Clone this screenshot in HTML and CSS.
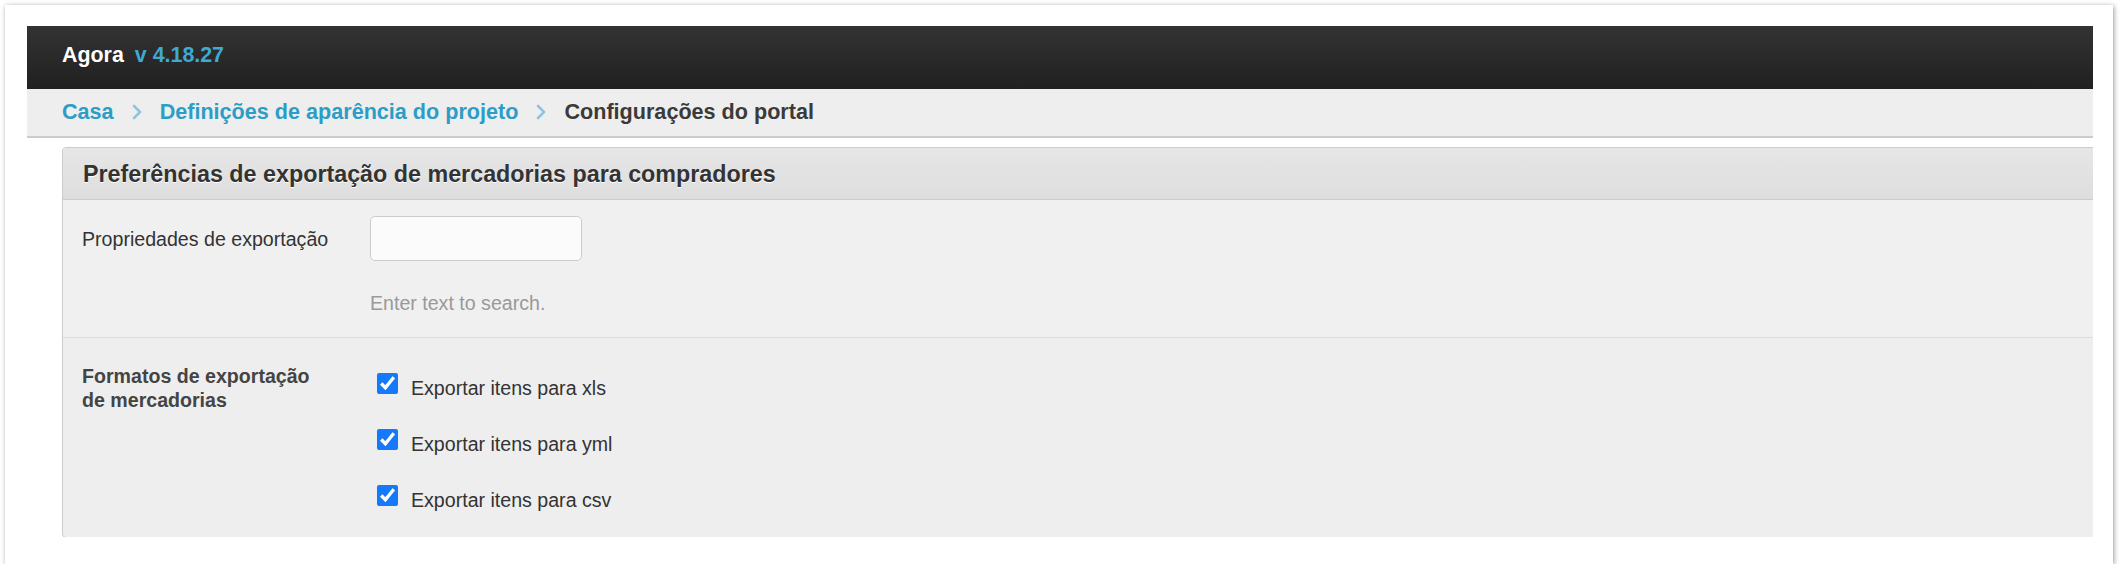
FILE: index.html
```html
<!DOCTYPE html>
<html lang="pt">
<head>
<meta charset="utf-8">
<title>Agora - Configurações do portal</title>
<link rel="stylesheet" href="styles.css">
</head>
<body>
<div class="card">
  <div class="app">
    <header class="topbar">
      <span class="brand">Agora</span>
      <span class="version">v 4.18.27</span>
    </header>
    <nav class="breadcrumb">
      <a class="crumb-link" href="#">Casa</a>
      <svg class="chev" width="10" height="16" viewBox="0 0 10 16"><polyline points="2,2 8,8 2,14" fill="none" stroke="#8ec4de" stroke-width="2.6" stroke-linecap="round" stroke-linejoin="round"/></svg>
      <a class="crumb-link" href="#">Definições de aparência do projeto</a>
      <svg class="chev" width="10" height="16" viewBox="0 0 10 16"><polyline points="2,2 8,8 2,14" fill="none" stroke="#8ec4de" stroke-width="2.6" stroke-linecap="round" stroke-linejoin="round"/></svg>
      <span class="crumb-current">Configurações do portal</span>
    </nav>
    <main class="content">
      <section class="panel">
        <div class="panel-head">Preferências de exportação de mercadorias para compradores</div>
        <div class="field field-first">
          <label class="field-label" for="props">Propriedades de exportação</label>
          <div class="field-control">
            <input class="text-input" id="props" type="text">
            <div class="help">Enter text to search.</div>
          </div>
        </div>
        <div class="field field-second">
          <div class="field-label bold">Formatos de exportação<br>de mercadorias</div>
          <div class="checks">
            <label class="check"><input type="checkbox" checked><span>Exportar itens para xls</span></label>
            <label class="check"><input type="checkbox" checked><span>Exportar itens para yml</span></label>
            <label class="check"><input type="checkbox" checked><span>Exportar itens para csv</span></label>
          </div>
        </div>
      </section>
    </main>
  </div>
</div>
</body>
</html>
```
FILE: styles.css
```css
* { box-sizing: border-box; }
html, body { margin: 0; padding: 0; background: #ffffff; }
body { font-family: "Liberation Sans", Arial, Helvetica, sans-serif; color: #333; }

.card {
  margin: 5px 0 0 5px;
  width: 2108px;
  height: 559px;
  background: #fff;
  box-shadow: 1px 1px 5px rgba(0,0,0,0.4);
  padding: 21px 20px 0 22px;
}
.app { overflow: hidden; height: 511px; }

.topbar {
  height: 63px;
  background: linear-gradient(#333333, #202020);
  display: flex;
  align-items: center;
  padding: 0 0 5px 35px;
  font-size: 21.4px;
  font-weight: bold;
}
.brand { color: #fff; }
.version { color: #3fa9d4; margin-left: 11px; }

.breadcrumb {
  height: 49px;
  background: #eeeeee;
  border-bottom: 2px solid #cccccc;
  display: flex;
  align-items: center;
  padding: 0 0 2px 35px;
  font-size: 21.6px;
  font-weight: bold;
}
.crumb-link { color: #2c9dc6; text-decoration: none; }
.crumb-current { color: #3a3a3a; }
.chev { margin: 0 18px 0 18px; }

.content { padding: 9px 0 0 35px; }

.panel {
  width: calc(100% + 10px);
  border: 1px solid #cccccc;
  border-radius: 4px;
  background: #eeeeee;
  overflow: hidden;
}
.panel-head {
  height: 52px;
  display: flex;
  align-items: center;
  padding: 1px 0 0 20px;
  background: linear-gradient(#e6e6e6, #dedede);
  border-bottom: 1px solid #cccccc;
  font-size: 23.3px;
  font-weight: bold;
  color: #333;
  text-shadow: 0 1px 0 #ffffff;
}

.field {
  display: grid;
  grid-template-columns: 288px 1fr;
  padding-left: 19px;
  font-size: 19.6px;
}
.field-first {
  background: #f0f0f0;
  border-bottom: 1px solid #dcdcdc;
  padding-top: 16px;
  padding-bottom: 20px;
  height: 138px;
}
.field-label { line-height: 45px; color: #333; padding-top: 1px; }
.field-label.bold { font-weight: bold; line-height: 24px; color: #444; padding-top: 26px; }
.text-input {
  display: block;
  width: 212px;
  height: 45px;
  border: 1px solid #cccccc;
  border-radius: 5px;
  background: #fbfbfb;
  margin: 0;
  padding: 0 8px;
  font: inherit;
}
.help { color: #999; margin-top: 30px; line-height: 24px; }

.field-second { height: 199px; }
.checks {
  display: flex;
  flex-direction: column;
  gap: 16px;
  padding-top: 25px;
}
.check {
  display: flex;
  align-items: flex-start;
  height: 40px;
  color: #333;
  margin-left: 7px;
}
.check input {
  flex: none;
  width: 21px;
  height: 21px;
  margin: 10px 13px 0 0;
  accent-color: #1479fb;
}
.check span { line-height: 24px; margin-top: 13px; }
```
